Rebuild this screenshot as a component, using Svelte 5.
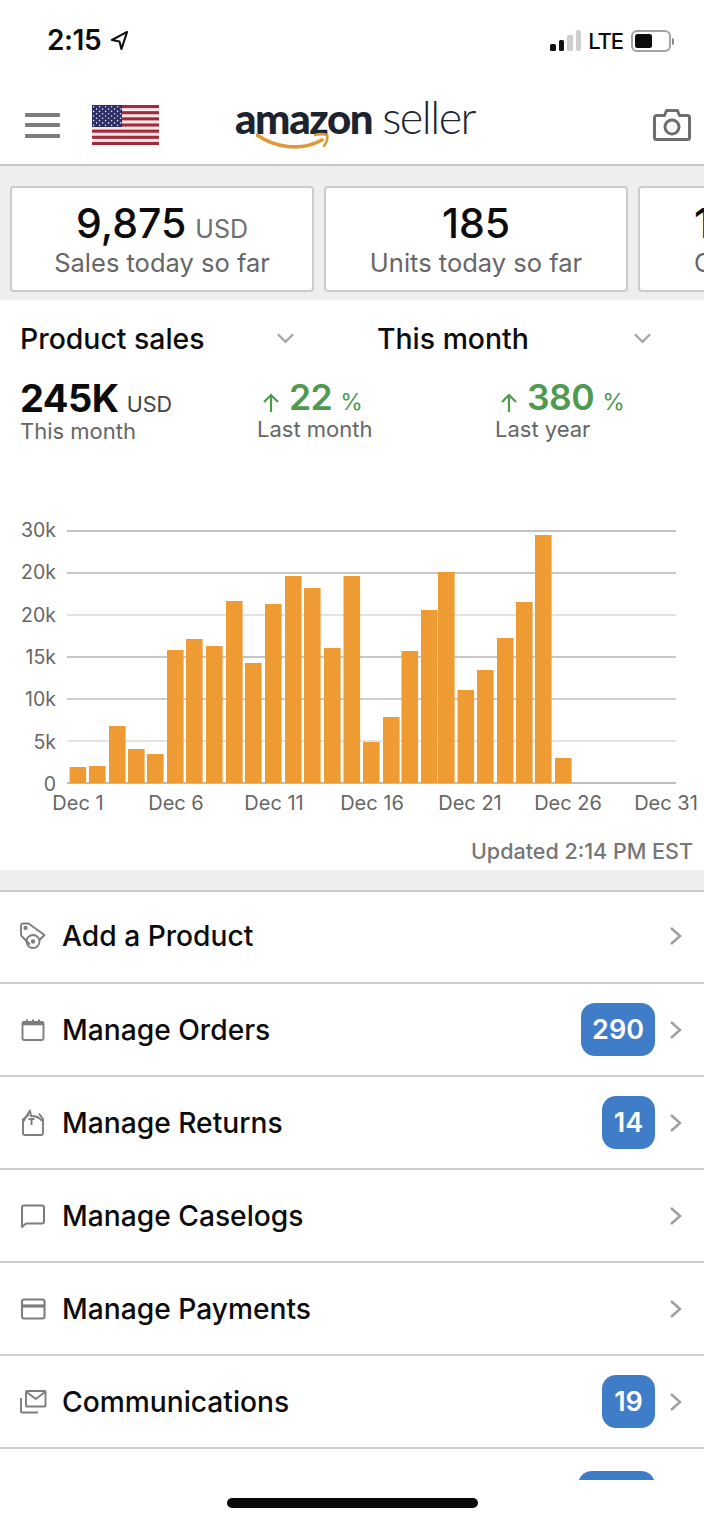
<script>
  const bars = [767,766,726,749,754,650,639,646,601,663,604,576,588,648,576,742,717,651,610,572,690,670,638,602,535,758];
  const barX = [2.6,22,42,61,80,100,119,139,159,178,198,218,237,257,276.500,296,316,334.500,354,371,390.500,410,430,449,468,488];
  const grid = [
    { y: 1, c: '#aeaeae' }, { y: 43, c: '#b4b4b4' }, { y: 85, c: '#dadada' },
    { y: 127, c: '#b4b4b4' }, { y: 169, c: '#bdbdbd' }, { y: 211, c: '#dadada' }, { y: 253, c: '#a8a8a8' }
  ];
  const yLabels = ['30k','20k','20k','15k','10k','5k','0'];
  const xLabels = ['Dec 1','Dec 6','Dec 11','Dec 16','Dec 21','Dec 26','Dec 31'];
  const rows = [
    { label: 'Add a Product', icon: 'tag' },
    { label: 'Manage Orders', icon: 'cal', badge: '290' },
    { label: 'Manage Returns', icon: 'ret', badge: '14' },
    { label: 'Manage Caselogs', icon: 'chat' },
    { label: 'Manage Payments', icon: 'card' },
    { label: 'Communications', icon: 'mail', badge: '19' }
  ];
  const stripes = [0,1,2,3,4,5,6];
  const dotRows = [0,1,2,3,4,5,6,7,8];
  const dotCols = [0,1,2,3,4,5,6,7,8,9];
</script>

<div class="page">
  <div class="status">
    <div class="time">2:15
      <svg class="loc" viewBox="0 0 20 22" width="19" height="21"><path d="M18 2 2 10.5l8 1.5 2 8z" fill="none" stroke="#111" stroke-width="2.2" stroke-linejoin="round"/></svg>
    </div>
    <div class="sys">
      <div class="signal"><i class="s1"></i><i class="s2"></i><i class="s3"></i><i class="s4"></i></div>
      <span class="lte">LTE</span>
      <div class="batt"><div class="fill"></div></div>
      <div class="nub"></div>
    </div>
  </div>

  <header class="head">
    <div class="burger"><i></i><i></i><i></i></div>
    <svg class="flag" viewBox="0 0 67 40" width="67" height="40">
      <rect width="67" height="40" fill="#fbe9ea"/>
      {#each stripes as s}
        <rect y={s * 6.15} width="67" height="3.1" fill="#a32a3c"/>
      {/each}
      <rect width="30" height="22" fill="#2b2f66"/>
      {#each dotRows as r}
        {#each dotCols as c}
          {#if (r + c) % 2 === 0}
            <circle cx={1.6 + c * 3} cy={1.8 + r * 2.3} r=".8" fill="#e4e6f2"/>
          {/if}
        {/each}
      {/each}
    </svg>
    <div class="logo">
      <span class="az">amazon</span><span class="sl">seller</span>
      <svg class="smile" viewBox="0 0 74 20" width="74" height="20">
        <path d="M1 3C18 15 44 20 66 8" fill="none" stroke="#e0983a" stroke-width="3.6" stroke-linecap="round"/>
        <path d="M59 3c4-1 9-1 12 0 1 3-1 8-3 11" fill="none" stroke="#e0983a" stroke-width="2.6" stroke-linecap="round"/>
      </svg>
    </div>
    <svg class="cam" viewBox="0 0 38 34" width="38" height="34">
      <path d="M3.5 7.5h8l2-5h11l2 5h8a2 2 0 0 1 2 2v20a2 2 0 0 1-2 2h-31a2 2 0 0 1-2-2v-20a2 2 0 0 1 2-2z" fill="none" stroke="#6e6e6e" stroke-width="3" stroke-linejoin="round"/>
      <circle cx="19" cy="19" r="7" fill="none" stroke="#6e6e6e" stroke-width="3"/>
    </svg>
  </header>

  <section class="band">
    <div class="card">
      <div class="val">9,875 <small>USD</small></div>
      <div class="cap">Sales today so far</div>
    </div>
    <div class="card">
      <div class="val">185</div>
      <div class="cap">Units today so far</div>
    </div>
    <div class="card more">
      <div class="val">1</div>
      <div class="cap">Orders today so far</div>
    </div>
  </section>

  <section class="sales">
    <div class="selects">
      <div class="sel">Product sales
        <svg viewBox="0 0 20 12" width="19" height="12"><path d="M2 2l8 8 8-8" fill="none" stroke="#a5a5a5" stroke-width="2.4"/></svg>
      </div>
      <div class="sel">This month
        <svg viewBox="0 0 20 12" width="19" height="12"><path d="M2 2l8 8 8-8" fill="none" stroke="#a5a5a5" stroke-width="2.4"/></svg>
      </div>
    </div>

    <div class="metrics">
      <div class="metric">
        <div class="big"><span>245K</span><small>USD</small></div>
        <div class="sub">This month</div>
      </div>
      <div class="metric">
        <div class="big up">
          <svg viewBox="0 0 18 20" width="18" height="20"><path d="M9 19V2M2 9l7-7 7 7" fill="none" stroke="#4f9a50" stroke-width="2.2"/></svg>
          <span>22</span><small>%</small>
        </div>
        <div class="sub">Last month</div>
      </div>
      <div class="metric">
        <div class="big up">
          <svg viewBox="0 0 18 20" width="18" height="20"><path d="M9 19V2M2 9l7-7 7 7" fill="none" stroke="#4f9a50" stroke-width="2.2"/></svg>
          <span>380</span><small>%</small>
        </div>
        <div class="sub">Last year</div>
      </div>
    </div>

    <div class="chart">
      <div class="yaxis">
        {#each yLabels as l}<span>{l}</span>{/each}
      </div>
      <svg class="plot" viewBox="0 0 609 254" width="609" height="254">
        {#each grid as g}
          <line x1="0" x2="609" y1={g.y} y2={g.y} stroke={g.c} stroke-width="1.6"/>
        {/each}
        {#each bars as top, i}
          <rect x={barX[i]} y={top - 530} width="16.6" height={783 - top} fill="#ee9b33"/>
        {/each}
      </svg>
    </div>
    <div class="xaxis">
      {#each xLabels as l}<span>{l}</span>{/each}
    </div>
    <div class="updated">Updated 2:14 PM EST</div>
  </section>

  <div class="gap"></div>

  <nav class="list">
    {#each rows as r}
      <div class="row">
        <svg class="ico" viewBox="0 0 28 28" width="28" height="28" fill="none" stroke="#7d7d7d" stroke-width="1.9" stroke-linejoin="round">
          {#if r.icon === 'tag'}
            <path d="M2 5.5V3.5a2 2 0 0 1 2-2h5.5L25.500 13l-5 5M11 22.500 3 14.500A3 3 0 0 1 2 12.500V5.500"/>
            <circle cx="6.500" cy="6" r="1.200"/>
            <circle cx="14" cy="19.500" r="6.500"/>
            <circle cx="14" cy="19.500" r="1.200" fill="#7d7d7d"/>
          {:else if r.icon === 'cal'}
            <path d="M5 6h18a1.500 1.500 0 0 1 1.500 1.500v15a1.500 1.500 0 0 1-1.500 1.500H5a1.500 1.500 0 0 1-1.500-1.500v-15A1.500 1.500 0 0 1 5 6z"/>
            <path d="M3.500 8h21" stroke-width="2.600"/>
            <path d="M8 3.500V7M14 3.500V7M20 3.500V7" stroke-width="2"/>
          {:else if r.icon === 'ret'}
            <path d="M10 5.500 4 10.500v14a1.500 1.500 0 0 0 1.500 1.500h17a1.500 1.500 0 0 0 1.500-1.500V10l-4-5.500"/>
            <path d="M4 13 11 1.500l1 5.500c5 0 9 2 11 5"/>
            <path d="M9.500 10h6M12.500 10v6"/>
          {:else if r.icon === 'chat'}
            <path d="M3 25V5.500A2 2 0 0 1 5 3.500h18a2 2 0 0 1 2 2v14a2 2 0 0 1-2 2H7z" stroke-width="2.100"/>
          {:else if r.icon === 'card'}
            <rect x="3" y="4.500" width="22.500" height="19" rx="2" stroke-width="2.100"/>
            <path d="M3 11h22.500" stroke-width="3.200"/>
          {:else}
            <rect x="7" y="3" width="19.500" height="15.500" rx="1"/>
            <path d="M7.500 4 16.800 11 26 4"/>
            <path d="M2 10v13.500a1 1 0 0 0 1 1h16"/>
          {/if}
        </svg>
        <span class="lbl">{r.label}</span>
        {#if r.badge}<span class="badge">{r.badge}</span>{/if}
        <svg class="chev" viewBox="0 0 13 20" width="13" height="20"><path d="M2 2l9 8-9 8" fill="none" stroke="#a0a0a0" stroke-width="2.500"/></svg>
      </div>
    {/each}
    <div class="row peek"><span class="badge wide"></span></div>
  </nav>

  <div class="home"><div class="pill"></div></div>
</div>

<style>
  :global(body) { margin: 0; background: #fff; }
  .page {
    width: 704px; height: 1520px; overflow: hidden; background: #fff;
    font-family: Inter, "Noto Sans", "Liberation Sans", sans-serif;
    color: #0c0c0c; display: flex; flex-direction: column;
  }
  .status {
    height: 80px; flex: none; box-sizing: border-box; padding: 23px 30px 0 47px;
    display: flex; justify-content: space-between; align-items: flex-start;
  }
  .time { font-size: 28px; font-weight: 600; line-height: 34px; display: flex; align-items: center; gap: 9px; letter-spacing: -.4px; }
  .loc { margin-top: 1px; }
  .sys { display: flex; align-items: center; height: 36px; }
  .signal { display: flex; align-items: flex-end; gap: 3px; height: 21px; margin-right: 7px; margin-top: -1px; }
  .signal i { width: 5.500px; border-radius: 1.500px; background: #111; display: block; }
  .s1 { height: 7px; } .s2 { height: 11px; }
  .signal .s3 { height: 16px; background: #cfcfcf; }
  .signal .s4 { height: 21px; background: #cfcfcf; }
  .lte { font-size: 22px; font-weight: 500; letter-spacing: -1.100px; margin-right: 8px; }
  .batt { width: 40px; height: 22px; box-sizing: border-box; border: 2px solid #a2a2a2; border-radius: 6px; padding: 2px; }
  .fill { width: 17px; height: 14px; background: #0c0c0c; border-radius: 2.500px; }
  .nub { width: 2px; height: 7px; background: #888; margin-left: 1px; border-radius: 0 2px 2px 0; }

  .head {
    height: 86px; flex: none; box-sizing: border-box; border-bottom: 2px solid #c6c6c6;
    display: flex; align-items: center; padding: 0 13px 0 25px; position: relative;
  }
  .burger { width: 35px; display: flex; flex-direction: column; gap: 6.500px; margin-right: 32px; margin-top: 6px; }
  .burger i { height: 4px; background: #7c7c7c; display: block; border-radius: 1px; }
  .flag { margin-top: 6px; flex: none; }
  .logo { margin-left: 76px; position: relative; display: flex; align-items: baseline; gap: 10px; margin-top: -9px; line-height: 50px; }
  .az { font-family: Lato, sans-serif; font-weight: 900; font-size: 42px; letter-spacing: -1.400px; color: #1c2430; display: inline-block; }
  .sl { font-family: Lato, sans-serif; font-weight: 300; font-size: 45px; letter-spacing: -1.500px; color: #1c2430; }
  .smile { position: absolute; left: 21px; top: 40px; }
  .cam { margin-left: auto; margin-top: 6px; }

  .band {
    height: 134px; flex: none; box-sizing: border-box; background: #eeeeee;
    display: flex; gap: 10px; padding: 20px 0 8px 10px; overflow: hidden;
  }
  .card {
    width: 304px; flex: none; box-sizing: border-box; background: #fff;
    border: 2px solid #cbcbcb; border-radius: 4px; text-align: center; padding-top: 12px;
  }
  .more { text-align: left; padding-left: 54px; }
  .val { font-size: 41px; font-weight: 500; line-height: 46px; word-spacing: -2px; }
  .val small { font-size: 25px; font-weight: 400; color: #6f6f6f; line-height: 1; }
  .cap { font-size: 25.500px; line-height: 34px; color: #666; white-space: nowrap; }

  .sales { height: 570px; flex: none; box-sizing: border-box; padding-top: 21px; }
  .selects { display: grid; grid-template-columns: 357px 307px; padding-left: 20px; }
  .sel { display: flex; justify-content: space-between; align-items: center; font-size: 28.400px; font-weight: 500; line-height: 36px; }
  .sel:first-child { padding-right: 72px; }
  .sel svg { margin-top: -3px; margin-right: 32px; }
  .sel:first-child svg { margin-right: 10px; }

  .metrics { display: grid; grid-template-columns: 237px 238px 1fr; padding-left: 20px; margin-top: 27px; }
  .big { font-size: 38px; font-weight: 700; line-height: 28px; display: flex; align-items: baseline; gap: 8px; letter-spacing: -.5px; }
  .big small { font-size: 21.500px; font-weight: 400; color: #444; letter-spacing: 0; }
  .up { color: #4f9a50; font-weight: 600; padding-left: 5px; gap: 8px; font-size: 35.500px; }
  .up small { color: #4f9a50; font-size: 23px; }
  .up svg { align-self: center; margin-top: 5px; margin-right: 1px; }
  .sub { font-size: 22px; line-height: 26px; color: #666; }

  .chart { display: flex; padding-top: 86px; }
  .yaxis {
    width: 56px; height: 278px; margin: -12px 11px -12px 0; box-sizing: border-box;
    display: flex; flex-direction: column; justify-content: space-between; align-items: flex-end;
    font-size: 19.500px; line-height: 24px; color: #666;
  }
  .plot { display: block; flex: none; }
  .xaxis { display: flex; padding-left: 29px; margin-top: 7px; }
  .xaxis span { width: 98px; flex: none; text-align: center; font-size: 20px; line-height: 24px; color: #666; white-space: nowrap; }
  .updated { text-align: right; padding-right: 11px; font-size: 21.500px; line-height: 28px; font-weight: 500; color: #767676; margin-top: 22px; }

  .gap { height: 20px; flex: none; background: #eeeeee; }
  .list { height: 590px; flex: none; overflow: hidden; border-top: 2px solid #c8c8c8; box-sizing: border-box; }
  .row {
    height: 93px; box-sizing: border-box; border-bottom: 2px solid #cdcdcd;
    display: flex; align-items: center; padding: 0 22px 0 19px;
  }
  .row:first-child { height: 92px; padding-bottom: 2px; }
  .ico { flex: none; margin-right: 15px; }
  .lbl { font-size: 28.200px; font-weight: 500; }
  .badge {
    margin-left: auto; height: 53px; min-width: 53px; box-sizing: border-box; padding: 0 11px;
    background: #3f7dc8; color: #fff; border-radius: 14px; font-size: 27px; font-weight: 600;
    display: flex; align-items: center; justify-content: center;
  }
  .chev { flex: none; margin-left: 14px; }
  .lbl + .chev { margin-left: auto; }
  .peek { border: none; align-items: flex-start; padding: 22px 49px 0 0; }
  .wide { width: 77px; }
  .home { flex: 1; display: flex; justify-content: center; padding-top: 18px; }
  .pill { width: 251px; height: 10px; border-radius: 5px; background: #0a0a0a; }
</style>
